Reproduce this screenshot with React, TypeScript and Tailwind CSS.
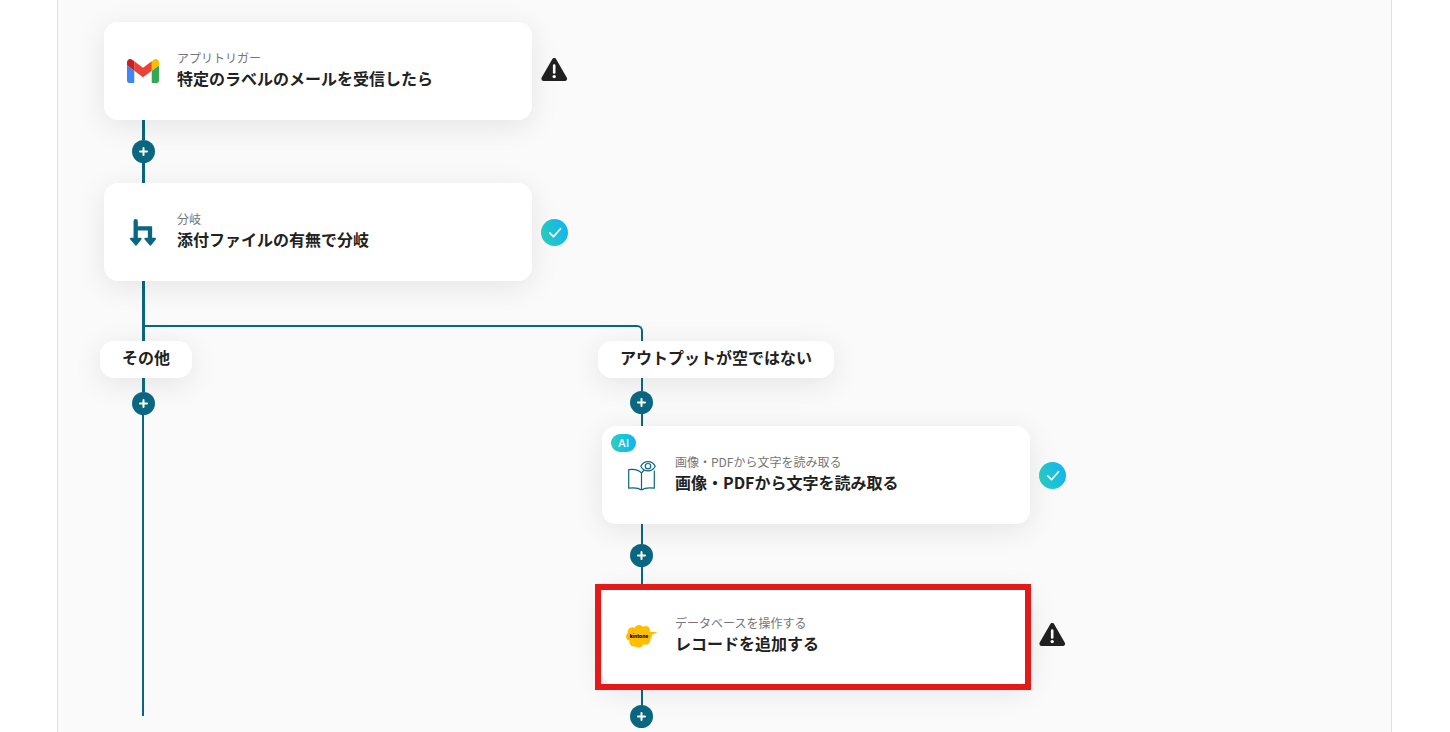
import type { ReactNode } from "react";

type Status = "ok" | "warning";

type CardProps = {
  icon: ReactNode;
  label: string;
  title: string;
  status: Status;
  ai?: boolean;
  highlighted?: boolean;
};

function GmailIcon() {
  return (
    <svg viewBox="52 42 88 66" className="h-6 w-8" aria-hidden="true">
      <path fill="#4285f4" d="M58 108h14V74L52 59v43c0 3.32 2.69 6 6 6" />
      <path fill="#34a853" d="M120 108h14c3.32 0 6-2.69 6-6V59l-20 15" />
      <path fill="#fbbc04" d="M120 48v26l20-15v-8c0-7.42-8.47-11.65-14.4-7.2" />
      <path fill="#ea4335" d="M72 74V48l24 18 24-18v26L96 92" />
      <path fill="#c5221f" d="M52 51v8l20 15V48l-5.6-4.2c-5.94-4.45-14.4-.22-14.4 7.2" />
    </svg>
  );
}

function BranchIcon() {
  return (
    <svg viewBox="0 0 28 28" className="size-7" aria-hidden="true" fill="none" stroke="#0a6781">
      <path d="M6.7 3.2V20M6.7 10.400H21V20" strokeWidth="4.3" strokeLinecap="round" />
      <path
        d="M2 20.800h9.600L7 26.600ZM16.400 20.800H26L21.400 26.600Z"
        fill="#0a6781"
        strokeWidth="2"
        strokeLinejoin="round"
      />
    </svg>
  );
}

function BookIcon() {
  return (
    <svg
      viewBox="0 0 30 32"
      className="h-8 w-[30px]"
      aria-hidden="true"
      fill="none"
      stroke="#0a6781"
      strokeWidth="1.2"
      strokeLinejoin="round"
    >
      <path d="M15.500 31C12.500 28.800 7 28.600 2.700 29.200V10.600c4.600-.7 9.800-.2 12.800 3.600V31M15.500 14.200c.7-1.400 1.500-2.200 2.700-2.800M28.300 11.400v17.800c-4.600-.6-9.800-.4-12.800 1.800" />
      <path d="M14.800 7.200c3.200-6.200 11.200-6.200 14.400 0-3.200 6.200-11.200 6.200-14.400 0z" />
      <circle cx="22" cy="7.200" r="2.700" />
    </svg>
  );
}

function KintoneIcon() {
  return (
    <svg viewBox="0 0 32 24" className="h-6 w-8" aria-hidden="true">
      <g fill="#ffbf00">
        <circle cx="14" cy="6" r="4.900" />
        <circle cx="20.500" cy="6.500" r="4.500" />
        <circle cx="7.500" cy="8" r="4.800" />
        <circle cx="5.300" cy="12.500" r="4.300" />
        <circle cx="9" cy="18" r="4.600" />
        <circle cx="13.500" cy="18.700" r="5" />
        <circle cx="20.500" cy="16" r="4.800" />
        <circle cx="23" cy="11.500" r="4" />
        <ellipse cx="14" cy="12" rx="9" ry="7" />
        <path d="M23 7.200C26 8 28.500 8 31.500 8c.5 0 .5.500 0 .8-2 .900-3.500 1.500-5.500 2.200z" />
      </g>
      <text
        x="14"
        y="14"
        textAnchor="middle"
        className="fill-black font-['Inter',sans-serif] text-[5px] font-extrabold"
      >
        kintone
      </text>
    </svg>
  );
}

function StatusIcon({ status }: { status: Status }) {
  if (status === "ok") {
    return (
      <svg viewBox="0 0 27 27" className="size-[27px] shrink-0" role="img" aria-label="設定済み">
        <defs>
          <linearGradient id="okFill" x1="0" y1="0.7" x2="1" y2="0.3">
            <stop offset="0" stopColor="#2bcfbe" />
            <stop offset="1" stopColor="#10b4f2" />
          </linearGradient>
        </defs>
        <circle cx="13.500" cy="13.500" r="13.500" fill="url(#okFill)" />
        <path
          d="M8.700 13.800l3.800 3.900 7-8"
          fill="none"
          stroke="#fff"
          strokeWidth="1.700"
          strokeLinecap="round"
          strokeLinejoin="round"
        />
      </svg>
    );
  }
  return (
    <svg viewBox="0 0 27 27" className="size-[27px] shrink-0" role="img" aria-label="警告">
      <path
        d="M13.200 2.300L23.700 20.700H2.700Z"
        fill="#212121"
        stroke="#212121"
        strokeWidth="4.600"
        strokeLinejoin="round"
      />
      <path d="M13.200 7.600v6.800" stroke="#fff" strokeWidth="2.600" strokeLinecap="round" />
      <circle cx="13.200" cy="18.600" r="1.700" fill="#fff" />
    </svg>
  );
}

function StepCard({ icon, label, title, status, ai, highlighted }: CardProps) {
  return (
    <div className="flex items-center gap-[9px]">
      <div className="relative flex h-[98px] w-[428px] items-center gap-[18px] rounded-[14px] bg-white pl-[23px] shadow-[0_6px_30px_rgba(0,0,0,0.09)]">
        {ai ? (
          <span className="absolute top-2 left-[9px] flex h-[18px] w-[25px] items-center justify-center rounded-full bg-linear-to-r from-[#2bcfbe] to-[#10b4f2] font-['Inter',sans-serif] text-[11px] font-medium text-white">
            AI
          </span>
        ) : null}
        <div className="flex w-8 justify-center">{icon}</div>
        <div className="pb-1.5">
          <p className="text-xs leading-5 text-[#757575]">{label}</p>
          <h3 className="text-base leading-5 font-bold text-[#212121]">{title}</h3>
        </div>
        {highlighted ? (
          <div className="pointer-events-none absolute -top-[3px] -right-px -bottom-[5px] -left-[7px] border-6 border-[#e61919]" />
        ) : null}
      </div>
      <StatusIcon status={status} />
    </div>
  );
}

function AddButton() {
  return (
    <button
      type="button"
      aria-label="追加"
      className="flex size-[23px] shrink-0 items-center justify-center rounded-full bg-[#0a6781] hover:bg-[#085469]"
    >
      <svg viewBox="0 0 9 9" className="size-[9px]" aria-hidden="true">
        <path d="M4.500 1v7M1 4.500h7" stroke="#fff" strokeWidth="2" strokeLinecap="round" />
      </svg>
    </button>
  );
}

function BranchLabel({ children }: { children: ReactNode }) {
  return (
    <div className="-ml-1 flex h-[37px] w-fit items-center rounded-[14px] bg-white px-[22px] pb-1.5 text-base font-bold whitespace-nowrap text-[#212121] shadow-[0_6px_30px_rgba(0,0,0,0.09)]">
      {children}
    </div>
  );
}

export default function App() {
  return (
    <div className="bg-white font-['Noto_Sans_CJK_JP',sans-serif]">
      <main className="mr-[58px] ml-[57px] min-h-screen border-x border-[#e0e0e0] bg-[#fafafa] pt-[22px] pb-1 pl-[46px]">
        <StepCard
          icon={<GmailIcon />}
          label="アプリトリガー"
          title="特定のラベルのメールを受信したら"
          status="warning"
        />
        <div className="flex h-[63px] w-[79px] flex-col items-center">
          <div className="w-[3px] flex-1 bg-[#0a6781]" />
          <AddButton />
          <div className="w-[3px] flex-1 bg-[#0a6781]" />
        </div>
        <StepCard
          icon={<BranchIcon />}
          label="分岐"
          title="添付ファイルの有無で分岐"
          status="ok"
        />

        {/* fork into the two branches */}
        <div className="flex h-[60px] items-end pl-[38px]">
          <div className="h-full w-[3px] bg-[#0a6781]" />
          <div className="h-4 w-[498px] rounded-tr-md border-t-2 border-r-2 border-[#0a6781]" />
        </div>

        <div className="flex">
          <section className="mb-3 flex w-[498px] shrink-0 flex-col">
            <BranchLabel>その他</BranchLabel>
            <div className="flex w-[79px] flex-1 flex-col items-center">
              <div className="h-[14px] w-[3px] bg-[#0a6781]" />
              <AddButton />
              <div className="ml-[38px] w-[2px] flex-1 self-start bg-[#0a6781]" />
            </div>
          </section>

          <section>
            <BranchLabel>アウトプットが空ではない</BranchLabel>
            <div className="flex h-12 w-[79px] flex-col items-center">
              <div className="w-[2px] flex-1 bg-[#0a6781]" />
              <AddButton />
              <div className="w-[2px] flex-1 bg-[#0a6781]" />
            </div>
            <StepCard
              icon={<BookIcon />}
              label="画像・PDFから文字を読み取る"
              title="画像・PDFから文字を読み取る"
              status="ok"
              ai
            />
            <div className="flex h-[63px] w-[79px] flex-col items-center">
              <div className="w-[2px] flex-1 bg-[#0a6781]" />
              <AddButton />
              <div className="w-[2px] flex-1 bg-[#0a6781]" />
            </div>
            <StepCard
              icon={<KintoneIcon />}
              label="データベースを操作する"
              title="レコードを追加する"
              status="warning"
              highlighted
            />
            <div className="flex w-[79px] flex-col items-center">
              <div className="h-5 w-[2px] bg-[#0a6781]" />
              <AddButton />
            </div>
          </section>
        </div>
      </main>
    </div>
  );
}
